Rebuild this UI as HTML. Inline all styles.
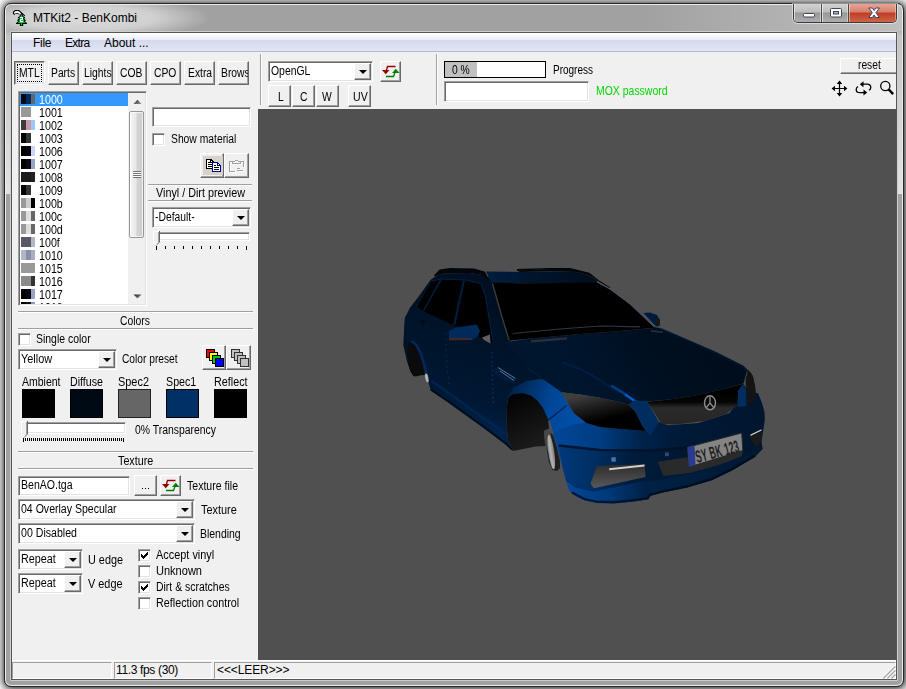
<!DOCTYPE html>
<html>
<head>
<meta charset="utf-8">
<title>MTKit2 - BenKombi</title>
<style>
*{box-sizing:border-box;margin:0;padding:0}
html,body{width:906px;height:689px;overflow:hidden}
body{position:relative;background:#fff;font-family:"Liberation Sans",sans-serif;font-size:12px;color:#000}
.a{position:absolute}
.t{filter:opacity(1);position:absolute;white-space:nowrap;line-height:13px;height:13px;font-size:12px;transform:scaleX(.86);transform-origin:0 0}
.t.n{transform:scaleX(.89)}
.s{position:absolute;white-space:nowrap;line-height:14px;height:14px;font-size:12px;letter-spacing:-.3px}
#bg{left:0;top:0;width:906px;height:689px;background:#fff}
#frame{left:4px;top:3px;width:900px;height:684px;border-radius:7px;background:#a1a1a1;border:1px solid #262626;box-shadow:.5px .5px 9px 1px rgba(0,0,0,.9), inset 0 0 0 1px rgba(255,255,255,.8)}
#glow{left:6px;top:5px;width:260px;height:26px;background:radial-gradient(ellipse 125px 22px at 80px 13px,rgba(255,255,255,.62) 0,rgba(255,255,255,.5) 55%,rgba(255,255,255,0) 100%)}
#sideL,#sideR{top:26px;width:4px;height:168px;background:linear-gradient(180deg,rgba(190,190,190,0) 0,#c4c4c4 10px,#e2e2e2 100%)}
#sideL{left:6px}#sideR{left:898px}
#glowR{left:640px;top:5px;width:262px;height:26px;background:linear-gradient(90deg,rgba(255,255,255,0) 0,rgba(255,255,255,.32) 100%)}
#clientb{left:10px;top:31px;width:888px;height:650px;border:1px solid #cdcdcd;border-radius:1px}
#clientb2{left:11px;top:32px;width:886px;height:648px;border:1px solid #565656;background:#f0f0f0}
#menubar{left:12px;top:33px;width:884px;height:19px;background:linear-gradient(180deg,#ffffff 0,#e9ecf7 7px,#d4d9ec 7px,#e1e5f5 18px,#b3b9ce 18px,#b3b9ce 19px)}
.btn{position:absolute;background:#f0f0f0;border:1px solid;border-color:#fff #696969 #696969 #fff;box-shadow:inset -1px -1px 0 #a0a0a0, inset 1px 1px 0 #f0f0f0;white-space:nowrap;overflow:hidden}
.btn.down{border-color:#696969 #fff #fff #696969;box-shadow:inset 1px 1px 0 #a0a0a0, inset -1px -1px 0 #e3e3e3}
.sunk{position:absolute;background:#fff;border:1px solid;border-color:#a0a0a0 #fff #fff #a0a0a0;box-shadow:inset 1px 1px 0 #696969, inset -1px -1px 0 #e3e3e3}
.cb{position:absolute;width:13px;height:13px;background:#fff;border:1px solid;border-color:#a0a0a0 #fff #fff #a0a0a0;box-shadow:inset 1px 1px 0 #696969, inset -1px -1px 0 #e3e3e3}
.dd{position:absolute;width:17px;background:#f0f0f0;border:1px solid;border-color:#fff #696969 #696969 #fff;box-shadow:inset -1px -1px 0 #a0a0a0}
.dd i{position:absolute;left:4px;width:0;height:0;border:4px solid transparent;border-top:4px solid #000;border-bottom:0}
.hsep{position:absolute;height:2px;border-top:1px solid #a0a0a0;border-bottom:1px solid #fff}
.vsep{position:absolute;width:2px;border-left:1px solid #a0a0a0;border-right:1px solid #fff}
#view{left:258px;top:109px;width:638px;height:551px;background:#505050;overflow:hidden}
.sw{position:absolute;height:10px}
.sw b{display:block;float:left;height:10px}
.row{position:absolute;left:0;width:108px;height:13px}
.pan{position:absolute;height:17px;top:662px;border:1px solid;border-color:#a0a0a0 #fff #fff #a0a0a0}

</style>
</head>
<body>
<div class="a" id="bg"></div>
<div class="a" id="frame"></div>
<div class="a" id="glow"></div>
<div class="a" id="glowR"></div>
<div class="a" id="sideL"></div>
<div class="a" id="sideR"></div>
<div class="a" id="clientb"></div>
<div class="a" id="clientb2"></div>
<div class="a" id="menubar"></div>
<svg class="a" style="left:10px;top:6px" width="22" height="22" viewBox="10 6 22 22">
<path d="M14.500 11.300h4.500l1.300 1.200-1 1.300h-4.300l-1-1.200z" fill="#f4f4f4"/>
<path d="M14.700 14.600l-1.200-1.200v-1.500l1.700-1.400h3.600l1.400 1.200 1.600 1.500 3 2.600" fill="none" stroke="#000" stroke-width="1.100"/>
<path d="M15.300 13.500h2.800l1.600 1.500" fill="none" stroke="#333" stroke-width="1"/>
<path d="M21.500 12.500L23.600 16.400L25.300 17.200L24.200 18.800L26 20.300L24.800 21.200L27.200 23.200L26.600 24L23.200 24L23.200 26L19.800 26L19.800 24L16.400 24L15.800 23.200L18.200 21.200L17 20.300L18.800 18.800L17.700 17.200L19.400 16.400Z" fill="#000"/>
<path d="M21.500 14L22.700 16.900L24 17.700L23 18.900L24.600 20.400L23.500 21.300L25.500 23.100L22 23.100L22 25.300L21 25.300L21 23.100L17.500 23.100L19.500 21.300L18.400 20.400L20 18.900L19 17.700L20.300 16.900Z" fill="#0c3"/>
<path d="M20 17h3v3h-2v1h2v1h-3v-3h2v-1h-2z" fill="#fff" shape-rendering="crispEdges"/>
</svg>
<span class="s" style="left:33px;top:11px;letter-spacing:0">MTKit2 - BenKombi</span>
<div class="a" style="left:793px;top:4px;width:104px;height:19px;border:1px solid #3a3a3a;border-top:0;border-radius:0 0 5px 5px;overflow:hidden;box-shadow:0 0 0 1px rgba(255,255,255,.5)">
<div class="a" style="left:0;top:0;width:28px;height:18px;background:linear-gradient(180deg,#d2d2d2 0,#bcbcbc 8px,#989898 9px,#aeaeae 18px);border-right:1px solid #4a4a4a;box-shadow:inset 1px 0 0 rgba(255,255,255,.6),inset -1px 0 0 rgba(255,255,255,.4)"></div>
<div class="a" style="left:28px;top:0;width:27px;height:18px;background:linear-gradient(180deg,#d2d2d2 0,#bcbcbc 8px,#989898 9px,#aeaeae 18px);border-right:1px solid #4a4a4a;box-shadow:inset 1px 0 0 rgba(255,255,255,.6),inset -1px 0 0 rgba(255,255,255,.4)"></div>
<div class="a" style="left:55px;top:0;width:47px;height:18px;background:linear-gradient(180deg,#e8a596 0,#d67f6b 8px,#c13c25 9px,#cc6548 18px);box-shadow:inset 1px 0 0 rgba(255,255,255,.45),inset -1px 0 0 rgba(255,255,255,.35)"></div>
</div>
<svg class="a" style="left:790px;top:0px" width="110" height="24" viewBox="790 0 110 24">
<rect x="803.500" y="13.500" width="11" height="3.500" fill="#fff" stroke="#40465a" rx="1"/>
<rect x="830.500" y="8.500" width="11" height="8.500" fill="#fff" stroke="#40465a" rx="1"/>
<rect x="833.500" y="11.500" width="5" height="2.500" fill="#b0b0b0" stroke="#40465a"/>
<path d="M868.800 8h3.600l1.700 2.500 1.700-2.500h3.600l-3.500 4.700 3.500 4.800h-3.600l-1.700-2.500-1.700 2.500h-3.600l3.500-4.800z" fill="#fff" stroke="#40465a" stroke-width="1" stroke-linejoin="round"/>
</svg>
<span class="s" style="left:33px;top:36px">File</span>
<span class="s" style="left:65px;top:36px;letter-spacing:-.7px">Extra</span>
<span class="s" style="left:104px;top:36px;letter-spacing:0">About ...</span>
<div class="a" id="view"><svg class="a" style="left:0;top:0" width="638" height="551" viewBox="258 109 638 551"><defs>
<linearGradient id="gSide" gradientUnits="userSpaceOnUse" x1="480" y1="300" x2="440" y2="410"><stop offset="0" stop-color="#001022"/><stop offset="0.5" stop-color="#00152c"/><stop offset="0.85" stop-color="#001834"/><stop offset="1" stop-color="#002146"/></linearGradient>
<linearGradient id="gHood" gradientUnits="userSpaceOnUse" x1="700" y1="335" x2="590" y2="400"><stop offset="0" stop-color="#000d1c"/><stop offset="0.5" stop-color="#001022"/><stop offset="1" stop-color="#00162e"/></linearGradient>
<linearGradient id="gBump" gradientUnits="userSpaceOnUse" x1="560" y1="440" x2="765" y2="420"><stop offset="0" stop-color="#004696"/><stop offset="0.2" stop-color="#003c80"/><stop offset="0.4" stop-color="#002248"/><stop offset="0.6" stop-color="#001936"/><stop offset="1" stop-color="#00162e"/></linearGradient>
<linearGradient id="gFlare" gradientUnits="userSpaceOnUse" x1="510" y1="400" x2="570" y2="420"><stop offset="0" stop-color="#00244c"/><stop offset="0.3" stop-color="#003570"/><stop offset="0.6" stop-color="#004696"/><stop offset="1" stop-color="#004ea5"/></linearGradient>
<linearGradient id="gArch" gradientUnits="userSpaceOnUse" x1="515" y1="400" x2="540" y2="450"><stop offset="0" stop-color="#050505"/><stop offset="1" stop-color="#1e1e1e"/></linearGradient>
<linearGradient id="gHL" gradientUnits="userSpaceOnUse" x1="592" y1="393" x2="600" y2="428"><stop offset="0" stop-color="#3e3e3e"/><stop offset=".4" stop-color="#1c1c1c"/><stop offset=".8" stop-color="#000"/></linearGradient>
<linearGradient id="gGr" gradientUnits="userSpaceOnUse" x1="0" y1="392" x2="0" y2="425"><stop offset="0" stop-color="#000"/><stop offset=".3" stop-color="#050505"/><stop offset=".48" stop-color="#2a2a2a"/><stop offset="1" stop-color="#262626"/></linearGradient>
<linearGradient id="gIn" gradientUnits="userSpaceOnUse" x1="0" y1="465" x2="0" y2="488"><stop offset="0" stop-color="#2e2e2e"/><stop offset="1" stop-color="#585858"/></linearGradient>
<linearGradient id="gWh" gradientUnits="userSpaceOnUse" x1="547" y1="0" x2="556" y2="0"><stop offset="0" stop-color="#6a6a6a"/><stop offset="0.4" stop-color="#b4b4b4"/><stop offset="0.7" stop-color="#8c8c8c"/><stop offset="1" stop-color="#444"/></linearGradient>
<linearGradient id="gRoof" gradientUnits="userSpaceOnUse" x1="487" y1="0" x2="597" y2="0"><stop offset="0" stop-color="#001e40"/><stop offset=".4" stop-color="#00152c"/><stop offset="1" stop-color="#000d1c"/></linearGradient>
</defs><polygon points="431,279.5 420,295 410,308 404.7,318 403.3,345 406.9,361 410.5,371.5 414,376.5 419,376 430,350" fill="#001226" /><polygon points="431,279.5 437,275.5 444,273.5 469,273 480,274.5 489,277 493,283 501,313 509.5,341 530,370 563,393 549.5,420 547,420 536,402 523,396 514,397.7 508.5,397 507,406 506.5,425 508,440 513,451 506.3,445.2 481.7,426.7 466,415.5 450.8,404.5 430.8,390.3 428.5,383 427.2,377.3 424.8,375 424.5,371 422,362 419,353 415.5,346 412,342.3 409,342 407.6,344 404,335 405,321 410,308 420,295" fill="url(#gSide)" /><path d="M431.500 381 L452 395.500 L482 417 L506.300 434.500" fill="none" stroke="#002754" stroke-width="2.500" opacity=".8"/><path d="M430.500 389.500 L450.800 403 L481.700 425.200 L506.300 443.700 L512 449.500" fill="none" stroke="#000b18" stroke-width="2" opacity=".9"/><polygon points="407.6,344 409,342 412,342.3 415.5,346 419,353 422,362 424.5,371 424.8,375 418.5,375.5 413.4,376 410.5,371.5 408.3,364" fill="#0b0b0b" /><path d="M411 341 L416 344.500 L420.500 353 L423.500 362 L426.500 372 L427.500 378" fill="none" stroke="#002d60" stroke-width="2.600" opacity=".85"/><ellipse cx="426.800" cy="378" rx="1.600" ry="4.500" fill="#b0b0b0" transform="rotate(-12 426.8 378)"/><ellipse cx="422.800" cy="321.400" rx="2.200" ry="2" fill="#000c1a"/><polygon points="507,406 508.5,397 513,394 523,393 531,395.5 537,400 543,408 548,419 549.5,432 546,446 536,446.5 513,451 508,440 506.5,425" fill="url(#gArch)" /><path d="M546 436 L550 431 L553.500 436 L557 448 L559.800 460 L560 468 L557 471 L552.500 470 L549 462 L546.500 448 Z" fill="#1e1e1e" /><path d="M543.700 431 L548.500 428.500 L551 431 L551.500 448 L548 452 L545 444 Z" fill="#474747" /><ellipse cx="551.300" cy="452" rx="3" ry="17.500" fill="url(#gWh)" transform="rotate(-8 551.3 452)"/><polygon points="507,404 508,396 514,387 527,381 540,379 554,383 561.5,389 561.5,392.2 567,402 574.3,413.4 586.4,423 600,427 620,429 646,431 650,436 640,452 600,458 575,462 566,480 562.8,468.3 558,450 553,432 549.5,420 548,419 543,408 537,400 531,395.5 523,393 513,394 508.5,397" fill="url(#gFlare)" /><path d="M547.500 420.700 L566.600 405.500" fill="none" stroke="#001a3a" stroke-width="1.200" opacity=".8"/><polygon points="553,432 575,424 586.4,423 600,427 620,429 646,431 659,422 668,425.3 698.6,423 729.5,413 742,396 743.5,383.5 748,392 752,400.5 756,393 758,393 762,403 764.5,412 764.8,420 763,432 761.5,442 762.7,448.7 754.8,457 731.8,470.5 711.7,480.2 687.3,487.6 663,492.5 649.8,496 648.3,499.3 636,501.2 614,503.6 597,503 585,500.5 578,497.5 572,493.5 569.4,490.4 566,480 562.8,468.3 558,450" fill="url(#gBump)" /><polygon points="506,342 530,338.5 575,334.5 620,331 658,327.5 672,333 686,339 716,352 743,365.5 751,373 754,380 747.4,369.5 743.5,383.5 720,390 694,395.8 670,399.5 646.7,401.5 634,400.5 629,405 615,401 598.6,397.6 580,394.5 561.5,392.2 530,370" fill="url(#gHood)" /><path d="M510 342.500 L550 358 L595 378.500 L640 398" fill="none" stroke="#001834" stroke-width="2" opacity=".6"/><linearGradient id="gHb" gradientUnits="userSpaceOnUse" x1="603" y1="372" x2="592" y2="397"><stop offset="0" stop-color="#003070" stop-opacity="0"/><stop offset=".75" stop-color="#003070" stop-opacity=".45"/><stop offset=".9" stop-color="#0050aa" stop-opacity=".9"/><stop offset="1" stop-color="#0058bb" stop-opacity="1"/></linearGradient><path d="M562 362.500 Q584 369 598.600 379.400 T622.900 392.800 L634 400.500" fill="none" stroke="#002248" stroke-width="2.200" opacity=".75"/><path d="M612 386 L622.900 392.800 L634 400.500" fill="none" stroke="#004696" stroke-width="2.400" opacity=".8" stroke-linecap="round"/><path d="M626 395 L634.500 400.800" fill="none" stroke="#005ec8" stroke-width="2.600" opacity=".9" stroke-linecap="round"/><path d="M660 328.500 L686 339.800 L716 353 L742.500 366.500 L750 373.500 L753.500 384" fill="none" stroke="#001a38" stroke-width="2" opacity=".6"/><polygon points="486,271.5 520,272 550,271.5 577,272 588,275 597,280.5 597,283 560,283 520,283 492,284" fill="url(#gRoof)" /><polygon points="434.5,276 440,270.5 450,269 474,269.3 484.5,272 488.5,280.5 480,274.5 469,273 444,273.5 437,275.5" fill="#02070e" /><path d="M434.500 276 L440 270.300 L450 268.800 L474 269.200 L484.500 272.300 L488.500 281" fill="none" stroke="#050505" stroke-width="1.500"/><polygon points="516,270.5 550,269 570,269 589,273.5 597,280 588,275 577,272 550,271.3 520,272" fill="#02070e" /><path d="M517 269.800 L550 268.600 L570 268.600 L589 273.500 L598 280.500 L610 288" fill="none" stroke="#050505" stroke-width="1.400"/><polygon points="492,282.6 520,283.2 560,283 597,282.6 610,289.5 630,304.5 653.4,326.7 657,327.5 620,331 575,334.5 530,338.5 508.7,340.8 500,312" fill="#000" /><path d="M492.500 283.500 L500.500 312 L509 340" fill="none" stroke="#3c3c3c" stroke-width="1.400"/><path d="M597 281.500 L612 290 L632 305 L656.700 327" fill="none" stroke="#4a5260" stroke-width="1.300"/><path d="M512.500 333.500 L560 329 L600 326 L640 326.800" fill="none" stroke="#30353c" stroke-width="1.200"/><polygon points="531,340.2 567,337.2 567,339.5 531,342.5" fill="#2a3038" /><polygon points="651,330 663,331.5 663,333 651,331.8" fill="#2a3038" /><polygon points="432,281 441,279 466,280 481,283.7 485,295 487.7,310 493.2,343.3 455,326 423.7,311.3 417,307" fill="#000" /><path d="M463.800 280.500 L454.300 325" fill="none" stroke="#001c3c" stroke-width="2.200"/><path d="M441 279.500 L423.500 310.800" fill="none" stroke="#001c3c" stroke-width="1.600"/><path d="M432 281 L441 279 L466 280 L481 283.700 L485 295 L487.700 310 L493.200 343.300" fill="none" stroke="#002146" stroke-width="1"/><polygon points="449,331 456,327.5 476.7,324.5 480,331 478,336 472.3,340 449,340" fill="#002a5a" /><polygon points="449,337.5 471,338 472.3,340 449,340.5" fill="#3a2a2a" /><polygon points="482,337.5 490,334.5 490.5,343.5 484,340" fill="#5e5e5e" /><polygon points="643.4,313 650,312.5 657,315 660,320 659.5,326 656,326.5" fill="#001c3c" /><polygon points="655,316 660,320 659.5,326 656.5,325" fill="#15171c" /><polygon points="494,368 499,366.5 516,378.5 514,383 505,380.5 494.5,373.5" fill="#001c3c" /><path d="M495 369 L514 381 M499 367.500 L497 371 M503 370 L501 374 M507 372.500 L505 376.500 M511 375 L509 379" fill="none" stroke="#06163a" stroke-width="1.200"/><path d="M498 367.500 L515.500 378.500 M500 371 L514 380.500" fill="none" stroke="#9aa8c0" stroke-width=".8" opacity=".8"/><path d="M492 352 L492.500 380 L493.500 405" fill="none" stroke="#0058bb" stroke-width=".8" stroke-dasharray="1.500 3" opacity=".7"/><path d="M446 333 L446.500 360 L449 386" fill="none" stroke="#0058bb" stroke-width=".8" stroke-dasharray="1.500 4" opacity=".5"/><polygon points="561.5,392.2 580,394.5 598.6,397.6 615,401 629,405 635,411 642.3,425.6 646,431 620,429 600,427 586.4,423 574.3,413.4 567,402" fill="url(#gHL)" /><polygon points="748,369.5 752.8,375.7 755,385 756,393 753,404 747,404 746,390 745.5,380" fill="#141414" /><polygon points="629,405 634,400.5 646.7,401 659,422 650,436 646,431 642.3,425.6 635,411" fill="#002d60" /><polygon points="647.2,401.7 670,399.5 694,395.8 720,390 743.3,383.7 738.3,391 737.6,405.3 726,413.9 704.6,421 675.9,424.6 661.5,424" fill="url(#gGr)" /><polygon points="743.3,383.7 746,390 746.5,406 738,406.7 737.6,405.3 738.3,391" fill="#002d60" /><ellipse cx="710" cy="402.800" rx="5.500" ry="7" fill="#0c0c0c" stroke="#8c8c8c" stroke-width="1.400"/><path d="M710 396.500 V403 L706 408 M710 403 L714 408" fill="none" stroke="#8c8c8c" stroke-width="1.300"/><linearGradient id="gLip" gradientUnits="userSpaceOnUse" x1="570" y1="0" x2="760" y2="0"><stop offset="0" stop-color="#004696"/><stop offset="0.2" stop-color="#00397a"/><stop offset="0.4" stop-color="#002146"/><stop offset="1" stop-color="#001832"/></linearGradient><linearGradient id="gLow" gradientUnits="userSpaceOnUse" x1="562" y1="0" x2="700" y2="0"><stop offset="0" stop-color="#003878"/><stop offset=".25" stop-color="#002d60"/><stop offset=".5" stop-color="#001c3c"/><stop offset="1" stop-color="#00162e"/></linearGradient><polygon points="558.7,446 600,450.5 650,451 687.6,448 688.7,467.2 663,479.5 645,481 593,491 575,487 566,480 562.8,468.3" fill="url(#gLow)" /><path d="M558.700 445.500 L600 450 L650 450.500 L687.600 447.500" fill="none" stroke="#001328" stroke-width="2.600" opacity=".9"/><polygon points="566,480 575,487 593,491 645,481 663,479.5 700,471 740,458 760,447 762.7,448.7 754.8,457 731.8,470.5 711.7,480.2 687.3,487.6 663,492.5 649.8,496 648.3,499.3 636,501.2 614,503.6 597,503 585,500.5 578,497.5 572,493.5 569.4,490.4" fill="url(#gLip)" /><path d="M572 492.500 L585 499.300 L597 501.600 L614 502.200 L636 499.800 L648 498 L650 494.800 L663 491.200 L687.300 486.300 L711.700 479 L731.800 469.300 L754.800 455.800" fill="none" stroke="#000a16" stroke-width="2.200" opacity=".75"/><polygon points="687.6,447.3 741.7,433 742.8,450.6 688.7,467.2" fill="#848484" stroke="#2a2a2a" stroke-width="1"/><polygon points="687.6,447.3 694.5,445.5 695.5,465.2 688.7,467.2" fill="#2a3a8c" /><text x="0" y="0" font-family="Liberation Sans" font-weight="bold" font-size="13" fill="#1e1e1e" transform="translate(697.300,463) rotate(-14.800) scale(.66,1.350)" letter-spacing=".3">SY BK 123</text><polygon points="597,466 644.5,463.9 645.6,477 593.8,488.2 590.5,483.8" fill="url(#gIn)" /><polygon points="609.2,468.3 644.5,464.6 644.5,466.6 609.2,470.3" fill="#cfcfcf" /><polygon points="657.8,461.7 687.6,457.3 688.7,467.2 742.8,450.6 742,456 720,465 690,473 663.3,476" fill="#292a2c" /><polygon points="749.4,436 761.5,429.7 761.5,442 756,447" fill="#1a1a1a" /><polygon points="750.5,434.5 761.5,429.2 761.5,430.6 750.5,436" fill="#cfcfcf" /><rect x="611.400" y="457.300" width="4.400" height="4.400" fill="#5070b0"/><rect x="665" y="452.400" width="3.800" height="3.800" fill="#33466e"/><path d="M566 480 L575 487 L593 491 L645 481 L663 479.500 L700 471 L740 458 L760 447" fill="none" stroke="#001a3a" stroke-width="1" opacity=".5"/></svg></div>
<div class="a" style="left:12px;top:660px;width:884px;height:1px;background:#fff"></div>
<div class="pan" style="left:12px;width:100px"></div>
<div class="pan" style="left:114px;width:98px"></div>
<div class="pan" style="left:214px;width:682px"></div>
<span class="s" style="left:116px;top:663px;letter-spacing:-.35px">11.3 fps (30)</span>
<span class="s" style="left:217px;top:663px;letter-spacing:-.1px">&lt;&lt;&lt;LEER&gt;&gt;&gt;</span>
<svg class="a" style="left:882px;top:665px" width="14" height="14" viewBox="0 0 14 14"><path d="M1.5 13.5l12-12M5.5 13.5l8-8M9.5 13.5l4-4" stroke="#a0a0a0" stroke-width="1.4" fill="none"/><path d="M2.5 13.5l11-11M6.5 13.5l7-7M10.5 13.5l3-3" stroke="#fff" stroke-width=".6" fill="none"/></svg>
<div class="btn down" style="left:14px;top:61px;width:31px;height:24px;"><div class="a" style="left:2px;top:2px;width:25px;height:18px;border:1px dotted #000"></div><span class="t " style="left:4px;top:5px;">MTL</span></div>
<div class="btn " style="left:48px;top:61px;width:31px;height:24px;"><span class="t " style="left:2px;top:5px;">Parts</span></div>
<div class="btn " style="left:82px;top:61px;width:31px;height:24px;"><span class="t " style="left:1px;top:5px;">Lights</span></div>
<div class="btn " style="left:116px;top:61px;width:31px;height:24px;"><span class="t " style="left:3px;top:5px;">COB</span></div>
<div class="btn " style="left:150px;top:61px;width:31px;height:24px;"><span class="t " style="left:3px;top:5px;">CPO</span></div>
<div class="btn " style="left:184px;top:61px;width:31px;height:24px;"><span class="t " style="left:3px;top:5px;">Extra</span></div>
<div class="btn " style="left:218px;top:61px;width:31px;height:24px;"><span class="t " style="left:2px;top:5px;">Brows</span></div>
<div class="sunk" style="left:18px;top:91px;width:129px;height:215px;"></div>
<div class="a" style="left:20px;top:93px;width:108px;height:211px;overflow:hidden"><div style="position:absolute;left:0px;top:0"><div class="row" style="top:0px;background:#3399ff;color:#fff;"><div class="sw" style="left:1px;top:1px"><b style="width:5px;background:#000a14"></b><b style="width:5px;background:#002a5c"></b><b style="width:4px;background:#666"></b></div><span class="t n" style="left:19px;top:1px;">1000</span></div><div class="row" style="top:13px;"><div class="sw" style="left:1px;top:1px"><b style="width:5px;background:#999"></b><b style="width:5px;background:#999"></b></div><span class="t n" style="left:19px;top:1px;">1001</span></div><div class="row" style="top:26px;"><div class="sw" style="left:1px;top:1px"><b style="width:5px;background:#3c3c3c"></b><b style="width:5px;background:#c89aa8"></b><b style="width:4px;background:#99c8ff"></b></div><span class="t n" style="left:19px;top:1px;">1002</span></div><div class="row" style="top:39px;"><div class="sw" style="left:1px;top:1px"><b style="width:5px;background:#000"></b><b style="width:5px;background:#333"></b></div><span class="t n" style="left:19px;top:1px;">1003</span></div><div class="row" style="top:52px;"><div class="sw" style="left:1px;top:1px"><b style="width:5px;background:#000"></b><b style="width:5px;background:#05050c"></b><b style="width:4px;background:#ccd5ff"></b></div><span class="t n" style="left:19px;top:1px;">1006</span></div><div class="row" style="top:65px;"><div class="sw" style="left:1px;top:1px"><b style="width:5px;background:#000"></b><b style="width:5px;background:#0a0a18"></b><b style="width:4px;background:#9aa3c8"></b></div><span class="t n" style="left:19px;top:1px;">1007</span></div><div class="row" style="top:78px;"><div class="sw" style="left:1px;top:1px"><b style="width:5px;background:#1a1a1a"></b><b style="width:5px;background:#1a1a1a"></b><b style="width:4px;background:#222"></b></div><span class="t n" style="left:19px;top:1px;">1008</span></div><div class="row" style="top:91px;"><div class="sw" style="left:1px;top:1px"><b style="width:5px;background:#000"></b><b style="width:5px;background:#333"></b></div><span class="t n" style="left:19px;top:1px;">1009</span></div><div class="row" style="top:104px;"><div class="sw" style="left:1px;top:1px"><b style="width:5px;background:#999"></b><b style="width:5px;background:#ccc"></b><b style="width:4px;background:#000"></b></div><span class="t n" style="left:19px;top:1px;">100b</span></div><div class="row" style="top:117px;"><div class="sw" style="left:1px;top:1px"><b style="width:5px;background:#999"></b><b style="width:5px;background:#ddd"></b><b style="width:4px;background:#666"></b></div><span class="t n" style="left:19px;top:1px;">100c</span></div><div class="row" style="top:130px;"><div class="sw" style="left:1px;top:1px"><b style="width:5px;background:#999"></b><b style="width:5px;background:#ddd"></b><b style="width:4px;background:#666"></b></div><span class="t n" style="left:19px;top:1px;">100d</span></div><div class="row" style="top:143px;"><div class="sw" style="left:1px;top:1px"><b style="width:5px;background:#555a66"></b><b style="width:5px;background:#555a66"></b><b style="width:4px;background:#b0b6c6"></b></div><span class="t n" style="left:19px;top:1px;">100f</span></div><div class="row" style="top:156px;"><div class="sw" style="left:1px;top:1px"><b style="width:5px;background:#b0b6cc"></b><b style="width:5px;background:#8a8ea6"></b><b style="width:4px;background:#a8aec4"></b></div><span class="t n" style="left:19px;top:1px;">1010</span></div><div class="row" style="top:169px;"><div class="sw" style="left:1px;top:1px"><b style="width:5px;background:#999"></b><b style="width:5px;background:#999"></b><b style="width:4px;background:#999"></b></div><span class="t n" style="left:19px;top:1px;">1015</span></div><div class="row" style="top:182px;"><div class="sw" style="left:1px;top:1px"><b style="width:5px;background:#8a8a8a"></b><b style="width:5px;background:#8a8a8a"></b><b style="width:4px;background:#333"></b></div><span class="t n" style="left:19px;top:1px;">1016</span></div><div class="row" style="top:195px;"><div class="sw" style="left:1px;top:1px"><b style="width:5px;background:#000"></b><b style="width:5px;background:#0a0a14"></b><b style="width:4px;background:#99a3cc"></b></div><span class="t n" style="left:19px;top:1px;">1017</span></div><div class="row" style="top:208px;"><div class="sw" style="left:1px;top:1px"><b style="width:5px;background:#000"></b><b style="width:5px;background:#111"></b><b style="width:4px;background:#8899cc"></b></div><span class="t n" style="left:19px;top:1px;">1018</span></div></div></div>
<div class="a" style="left:128px;top:93px;width:17px;height:211px;background:#f0f0f0;overflow:hidden">
<svg class="a" style="left:0;top:0" width="17" height="17" viewBox="0 0 17 17"><defs><linearGradient id="ag" x1="0" y1="0" x2="1" y2="1"><stop offset="0" stop-color="#222"/><stop offset="1" stop-color="#999"/></linearGradient></defs><path d="M5.500 11l4-4.300 4 4.300z" fill="url(#ag)"/></svg>
<div class="a" style="left:1px;top:18px;width:15px;height:127px;border:1px solid #979797;border-radius:2px;background:linear-gradient(90deg,#f6f6f6 0,#e8e8e8 45%,#d4d4d4 55%,#cdcdcd 100%);box-shadow:inset 0 0 0 1px rgba(255,255,255,.7)"></div>
<div class="a" style="left:5px;top:78px;width:8px;height:7px;background:repeating-linear-gradient(180deg,#707070 0,#707070 1px,#fff 1px,#fff 2px)"></div>
<svg class="a" style="left:0;top:194px" width="17" height="17" viewBox="0 0 17 17"><path d="M5.500 7.500l4 4 4-4z" fill="url(#ag)"/></svg>
</div>
<div class="sunk" style="left:152px;top:107px;width:99px;height:20px;"></div>
<div class="cb" style="left:152px;top:133px"></div>
<span class="t " style="left:171px;top:133px;">Show material</span>
<div class="btn " style="left:200px;top:153px;width:24px;height:25px;"><svg class="a" style="left:0px;top:0px" width="24" height="24" viewBox="0 0 24 24" shape-rendering="crispEdges"><rect x="2" y="2" width="20" height="19" fill="#d6d3ce"/><path d="M5.500 5.500h4.500l2.500 2.500v6.500h-7z" fill="#fff" stroke="#000"/><path d="M9.500 5.500v3h3" fill="none" stroke="#000"/><path d="M7 8.500h2M7 10.500h4M7 12.500h4" stroke="#000"/><path d="M11.500 8.500h5l3 3v6h-8z" fill="#fff" stroke="#000080"/><path d="M16.500 8.500v3h3" fill="none" stroke="#000080"/><path d="M13 11.500h2M13 13.500h5M13 15.500h5" stroke="#000"/></svg></div>
<div class="btn " style="left:224px;top:153px;width:25px;height:25px;"><svg class="a" style="left:0px;top:0px" width="24" height="24" viewBox="0 0 24 24" shape-rendering="crispEdges"><path d="M7.500 7.500h-3v10h5M15.500 7.500h3v5M7.500 9.500v-2h2l1-1.500h2l1 1.500h2v2zM12 14.500h3M12 16.500h6" fill="none" stroke="#fff" transform="translate(1,1)"/><path d="M7.500 7.500h-3v10h5M15.500 7.500h3v5M7.500 9.500v-2h2l1-1.500h2l1 1.500h2v2zM12 14.500h3M12 16.500h6" fill="none" stroke="#a0a0a0"/></svg></div>
<div class="hsep" style="left:148px;top:184px;width:104px"></div>
<span class="t " style="left:156px;top:187px;transform:scaleX(0.898);">Vinyl / Dirt preview</span>
<div class="hsep" style="left:148px;top:200px;width:104px"></div>
<div class="sunk" style="left:152px;top:207px;width:99px;height:21px"><span class="a" style="left:2px;top:3px"><span class="t " style="left:0px;top:0px;">-Default-</span></span><div class="dd" style="right:1px;top:1px;height:17px"><i style="top:6px"></i></div></div>
<div class="a" style="left:155px;top:232px;width:95px;height:9px;border:1px solid;border-color:#a0a0a0 #fff #fff #a0a0a0;box-shadow:inset 1px 1px 0 #696969, inset -1px -1px 0 #e3e3e3;background:#fff"></div>
<svg class="a" style="left:153px;top:231px" width="7" height="15" viewBox="0 0 7 15" shape-rendering="crispEdges"><path d="M0 0h7v11l-3.500 3.500l-3.500-3.500z" fill="#f0f0f0"/><path d="M.5 0v11" stroke="#fff"/><path d="M0 .5h6" stroke="#fff"/><path d="M5.500 1v10" stroke="#a0a0a0"/><path d="M6.500 0v11" stroke="#696969"/><path d="M6.500 11l-3.500 3.500" stroke="#696969" shape-rendering="auto"/><path d="M.5 11l3 3" stroke="#fff" shape-rendering="auto"/></svg>
<div class="a" style="left:156px;top:246px;width:91px;height:3px;background:repeating-linear-gradient(90deg,#000 0,#000 1px,transparent 1px,transparent 9px)"></div>
<div class="a" style="left:156px;top:249px;width:1px;height:1px;background:#000"></div><div class="a" style="left:246px;top:249px;width:1px;height:1px;background:#000"></div>
<div class="hsep" style="left:18px;top:311px;width:235px"></div>
<span class="t " style="left:120px;top:315px;">Colors</span>
<div class="hsep" style="left:18px;top:328px;width:235px"></div>
<div class="cb" style="left:18px;top:333px"></div>
<span class="t " style="left:36px;top:333px;transform:scaleX(0.871);">Single color</span>
<div class="sunk" style="left:18px;top:349px;width:99px;height:21px"><span class="a" style="left:2px;top:3px"><span class="t " style="left:0px;top:0px;transform:scaleX(0.908);">Yellow</span></span><div class="dd" style="right:1px;top:1px;height:17px"><i style="top:6px"></i></div></div>
<span class="t " style="left:122px;top:353px;transform:scaleX(0.851);">Color preset</span>
<div class="btn " style="left:202px;top:345px;width:24px;height:25px;"><svg class="a" style="left:-1px;top:-1px" width="25" height="25" viewBox="0 0 25 25" shape-rendering="crispEdges"><rect x="4.5" y="4.5" width="8" height="8" fill="#f00" stroke="#000"/><rect x="7.5" y="7.5" width="8" height="8" fill="#ff0" stroke="#000"/><rect x="10.5" y="10.5" width="8" height="8" fill="#0c0" stroke="#000"/><rect x="13.5" y="13.5" width="8" height="8" fill="#00f" stroke="#000"/></svg></div>
<div class="btn " style="left:226px;top:345px;width:25px;height:25px;"><svg class="a" style="left:-1px;top:-1px" width="25" height="25" viewBox="0 0 25 25" shape-rendering="crispEdges"><rect x="5.5" y="4.5" width="8" height="8" fill="#c0c0c0" stroke="#303030"/><rect x="8.5" y="7.5" width="8" height="8" fill="#c0c0c0" stroke="#303030"/><rect x="11.5" y="10.5" width="8" height="8" fill="#c0c0c0" stroke="#303030"/><rect x="14.5" y="13.5" width="8" height="8" fill="#c0c0c0" stroke="#303030"/></svg></div>
<span class="t " style="left:22px;top:376px;transform:scaleX(0.875);">Ambient</span>
<div class="a" style="left:22px;top:389px;width:33px;height:29px;background:#000;border:1px solid #000"></div>
<span class="t " style="left:70px;top:376px;transform:scaleX(0.889);">Diffuse</span>
<div class="a" style="left:70px;top:389px;width:33px;height:29px;background:#000a14;border:1px solid #000"></div>
<span class="t " style="left:118px;top:376px;transform:scaleX(0.911);">Spec2</span>
<div class="a" style="left:118px;top:389px;width:33px;height:29px;background:#666;border:1px solid #222"></div>
<span class="t " style="left:166px;top:376px;transform:scaleX(0.891);">Spec1</span>
<div class="a" style="left:166px;top:389px;width:33px;height:29px;background:#003066;border:1px solid #000"></div>
<span class="t " style="left:214px;top:376px;transform:scaleX(0.897);">Reflect</span>
<div class="a" style="left:214px;top:389px;width:33px;height:29px;background:#000;border:1px solid #000"></div>
<div class="a" style="left:21px;top:422px;width:105px;height:12px;border:1px solid;border-color:#a0a0a0 #fff #fff #a0a0a0;box-shadow:inset 1px 1px 0 #696969, inset -1px -1px 0 #e3e3e3;background:#fff"></div>
<svg class="a" style="left:21px;top:421px" width="7" height="17" viewBox="0 0 7 17" shape-rendering="crispEdges"><path d="M0 0h7v13l-3.500 3.500l-3.500-3.500z" fill="#f0f0f0"/><path d="M.5 0v13" stroke="#fff"/><path d="M0 .5h6" stroke="#fff"/><path d="M5.500 1v12" stroke="#a0a0a0"/><path d="M6.500 0v13" stroke="#696969"/><path d="M6.500 13l-3.500 3.500" stroke="#696969" shape-rendering="auto"/><path d="M.5 13l3 3" stroke="#fff" shape-rendering="auto"/></svg>
<div class="a" style="left:23px;top:438px;width:102px;height:3px;background:repeating-linear-gradient(90deg,#000 0,#000 1px,transparent 1px,transparent 2px)"></div>
<div class="a" style="left:23px;top:441px;width:1px;height:1px;background:#000"></div><div class="a" style="left:123px;top:441px;width:1px;height:1px;background:#000"></div>
<span class="t " style="left:135px;top:424px;transform:scaleX(0.867);">0% Transparency</span>
<div class="hsep" style="left:18px;top:451px;width:235px"></div>
<span class="t " style="left:118px;top:455px;transform:scaleX(0.897);">Texture</span>
<div class="hsep" style="left:18px;top:468px;width:235px"></div>
<div class="sunk" style="left:18px;top:476px;width:112px;height:20px;"><span class="t " style="left:2px;top:2px;transform:scaleX(0.879);">BenAO.tga</span></div>
<div class="btn " style="left:134px;top:475px;width:23px;height:21px;"><div class="a" style="left:7px;top:12px;width:1px;height:1px;background:#000;box-shadow:3px 0 0 #000,6px 0 0 #000"></div></div>
<div class="btn " style="left:160px;top:475px;width:21px;height:21px;"><svg class="a" style="left:-1px;top:-1px" width="21" height="21" viewBox="0 0 21 21"><path d="M15.500 5.500H7.500L6 11" fill="none" stroke="#900000" stroke-width="1.300"/><path d="M2 9h7.500l-3.700 4.300z" fill="#900000"/><path d="M6 15.500h7.500L15.500 10" fill="none" stroke="#008000" stroke-width="1.300"/><path d="M12 12h7.500l-3.700-4.300z" fill="#008000"/></svg></div>
<span class="t " style="left:187px;top:480px;transform:scaleX(0.879);">Texture file</span>
<div class="sunk" style="left:18px;top:499px;width:177px;height:21px"><span class="a" style="left:2px;top:3px"><span class="t " style="left:0px;top:0px;transform:scaleX(0.879);">04 Overlay Specular</span></span><div class="dd" style="right:1px;top:1px;height:17px"><i style="top:6px"></i></div></div>
<span class="t " style="left:201px;top:504px;transform:scaleX(0.910);">Texture</span>
<div class="sunk" style="left:18px;top:523px;width:177px;height:21px"><span class="a" style="left:2px;top:3px"><span class="t " style="left:0px;top:0px;transform:scaleX(0.884);">00 Disabled</span></span><div class="dd" style="right:1px;top:1px;height:17px"><i style="top:6px"></i></div></div>
<span class="t " style="left:200px;top:528px;transform:scaleX(0.871);">Blending</span>
<div class="sunk" style="left:18px;top:549px;width:65px;height:21px"><span class="a" style="left:2px;top:3px"><span class="t " style="left:0px;top:0px;transform:scaleX(0.897);">Repeat</span></span><div class="dd" style="right:1px;top:1px;height:17px"><i style="top:6px"></i></div></div>
<span class="t " style="left:88px;top:554px;transform:scaleX(0.905);">U edge</span>
<div class="sunk" style="left:18px;top:573px;width:65px;height:21px"><span class="a" style="left:2px;top:3px"><span class="t " style="left:0px;top:0px;transform:scaleX(0.897);">Repeat</span></span><div class="dd" style="right:1px;top:1px;height:17px"><i style="top:6px"></i></div></div>
<span class="t " style="left:88px;top:578px;transform:scaleX(0.908);">V edge</span>
<div class="cb" style="left:138px;top:549px"><svg width="7" height="7" viewBox="0 0 7 7" shape-rendering="crispEdges" style="position:absolute;left:2px;top:2px"><path d="M0 2h1v1h1v1h1v-1h1v-1h1v-1h1v-1h1v3h-1v1h-1v1h-1v1h-1v1h-1v-1h-1v-1h-1z" fill="#000"/></svg></div>
<span class="t " style="left:156px;top:549px;transform:scaleX(0.909);">Accept vinyl</span>
<div class="cb" style="left:138px;top:565px"></div>
<span class="t " style="left:156px;top:565px;transform:scaleX(0.919);">Unknown</span>
<div class="cb" style="left:138px;top:581px"><svg width="7" height="7" viewBox="0 0 7 7" shape-rendering="crispEdges" style="position:absolute;left:2px;top:2px"><path d="M0 2h1v1h1v1h1v-1h1v-1h1v-1h1v-1h1v3h-1v1h-1v1h-1v1h-1v1h-1v-1h-1v-1h-1z" fill="#000"/></svg></div>
<span class="t " style="left:156px;top:581px;transform:scaleX(0.870);">Dirt &amp; scratches</span>
<div class="cb" style="left:138px;top:597px"></div>
<span class="t " style="left:156px;top:597px;transform:scaleX(0.897);">Reflection control</span>
<div class="vsep" style="left:260px;top:54px;height:51px"></div>
<div class="vsep" style="left:436px;top:54px;height:51px"></div>
<div class="sunk" style="left:268px;top:61px;width:105px;height:21px"><span class="a" style="left:2px;top:3px"><span class="t " style="left:0px;top:0px;transform:scaleX(0.867);">OpenGL</span></span><div class="dd" style="right:1px;top:1px;height:17px"><i style="top:6px"></i></div></div>
<div class="btn " style="left:380px;top:61px;width:21px;height:21px;"><svg class="a" style="left:-1px;top:-1px" width="21" height="21" viewBox="0 0 21 21"><path d="M15.500 5.500H7.500L6 11" fill="none" stroke="#900000" stroke-width="1.300"/><path d="M2 9h7.500l-3.700 4.300z" fill="#900000"/><path d="M6 15.500h7.500L15.500 10" fill="none" stroke="#008000" stroke-width="1.300"/><path d="M12 12h7.500l-3.700-4.300z" fill="#008000"/></svg></div>
<div class="btn " style="left:268px;top:85px;width:23px;height:22px;"><span class="t " style="left:9px;top:5px;">L</span></div>
<div class="btn " style="left:292px;top:85px;width:23px;height:22px;"><span class="t " style="left:7px;top:5px;">C</span></div>
<div class="btn " style="left:316px;top:85px;width:23px;height:22px;"><span class="t " style="left:5px;top:5px;">W</span></div>
<div class="btn " style="left:348px;top:85px;width:23px;height:22px;"><span class="t " style="left:4px;top:5px;transform:scaleX(0.882);">UV</span></div>
<div class="a" style="left:444px;top:61px;width:102px;height:17px;border:1px solid #000;background:#fff"><div class="a" style="left:0;top:0;width:32px;height:15px;background:#c0c0c0"></div></div>
<span class="t " style="left:452px;top:64px;">0 %</span>
<span class="t " style="left:553px;top:64px;transform:scaleX(0.833);">Progress</span>
<div class="sunk" style="left:444px;top:81px;width:145px;height:21px;"></div>
<span class="t " style="left:596px;top:85px;color:#00d400;transform:scaleX(0.872);">MOX password</span>
<div class="a" style="left:840px;top:58px;width:56px;height:16px;overflow:hidden"><div class="btn " style="left:0px;top:0px;width:60px;height:16px;"><span class="t " style="left:17px;top:0px;transform:scaleX(0.855);">reset</span></div></div>
<svg class="a" style="left:828px;top:78px" width="68" height="20" viewBox="828 78 68 20">
<path d="M839.500 82v13M833 88.500h13" stroke="#000" stroke-width="1.200" fill="none"/>
<path d="M839.500 80.600l2.800 3.400h-5.600zM839.500 96.400l2.800-3.400h-5.600zM831.600 88.500l3.400-2.800v5.600zM847.400 88.500l-3.400-2.800v5.600z" fill="#000"/>
<path d="M862.500 84.200h4.500c2.500 0 3.800 1.500 3.800 3.200c0 1.200-.6 2.200-1.800 2.900" fill="none" stroke="#000" stroke-width="1.300"/>
<path d="M859.800 84.200l3.700-3v6z" fill="#000"/>
<path d="M864.500 92.600h-4.500c-2.500 0-3.800-1.500-3.800-3.200c0-1.200.6-2.200 1.800-2.900" fill="none" stroke="#000" stroke-width="1.300"/>
<path d="M867.200 92.600l-3.700-3v6z" fill="#000"/>
<circle cx="885.300" cy="86" r="4.600" fill="none" stroke="#000" stroke-width="1.300"/><path d="M888.600 89.400l4.600 4.700" stroke="#000" stroke-width="2.300"/>
</svg>
</body>
</html>
